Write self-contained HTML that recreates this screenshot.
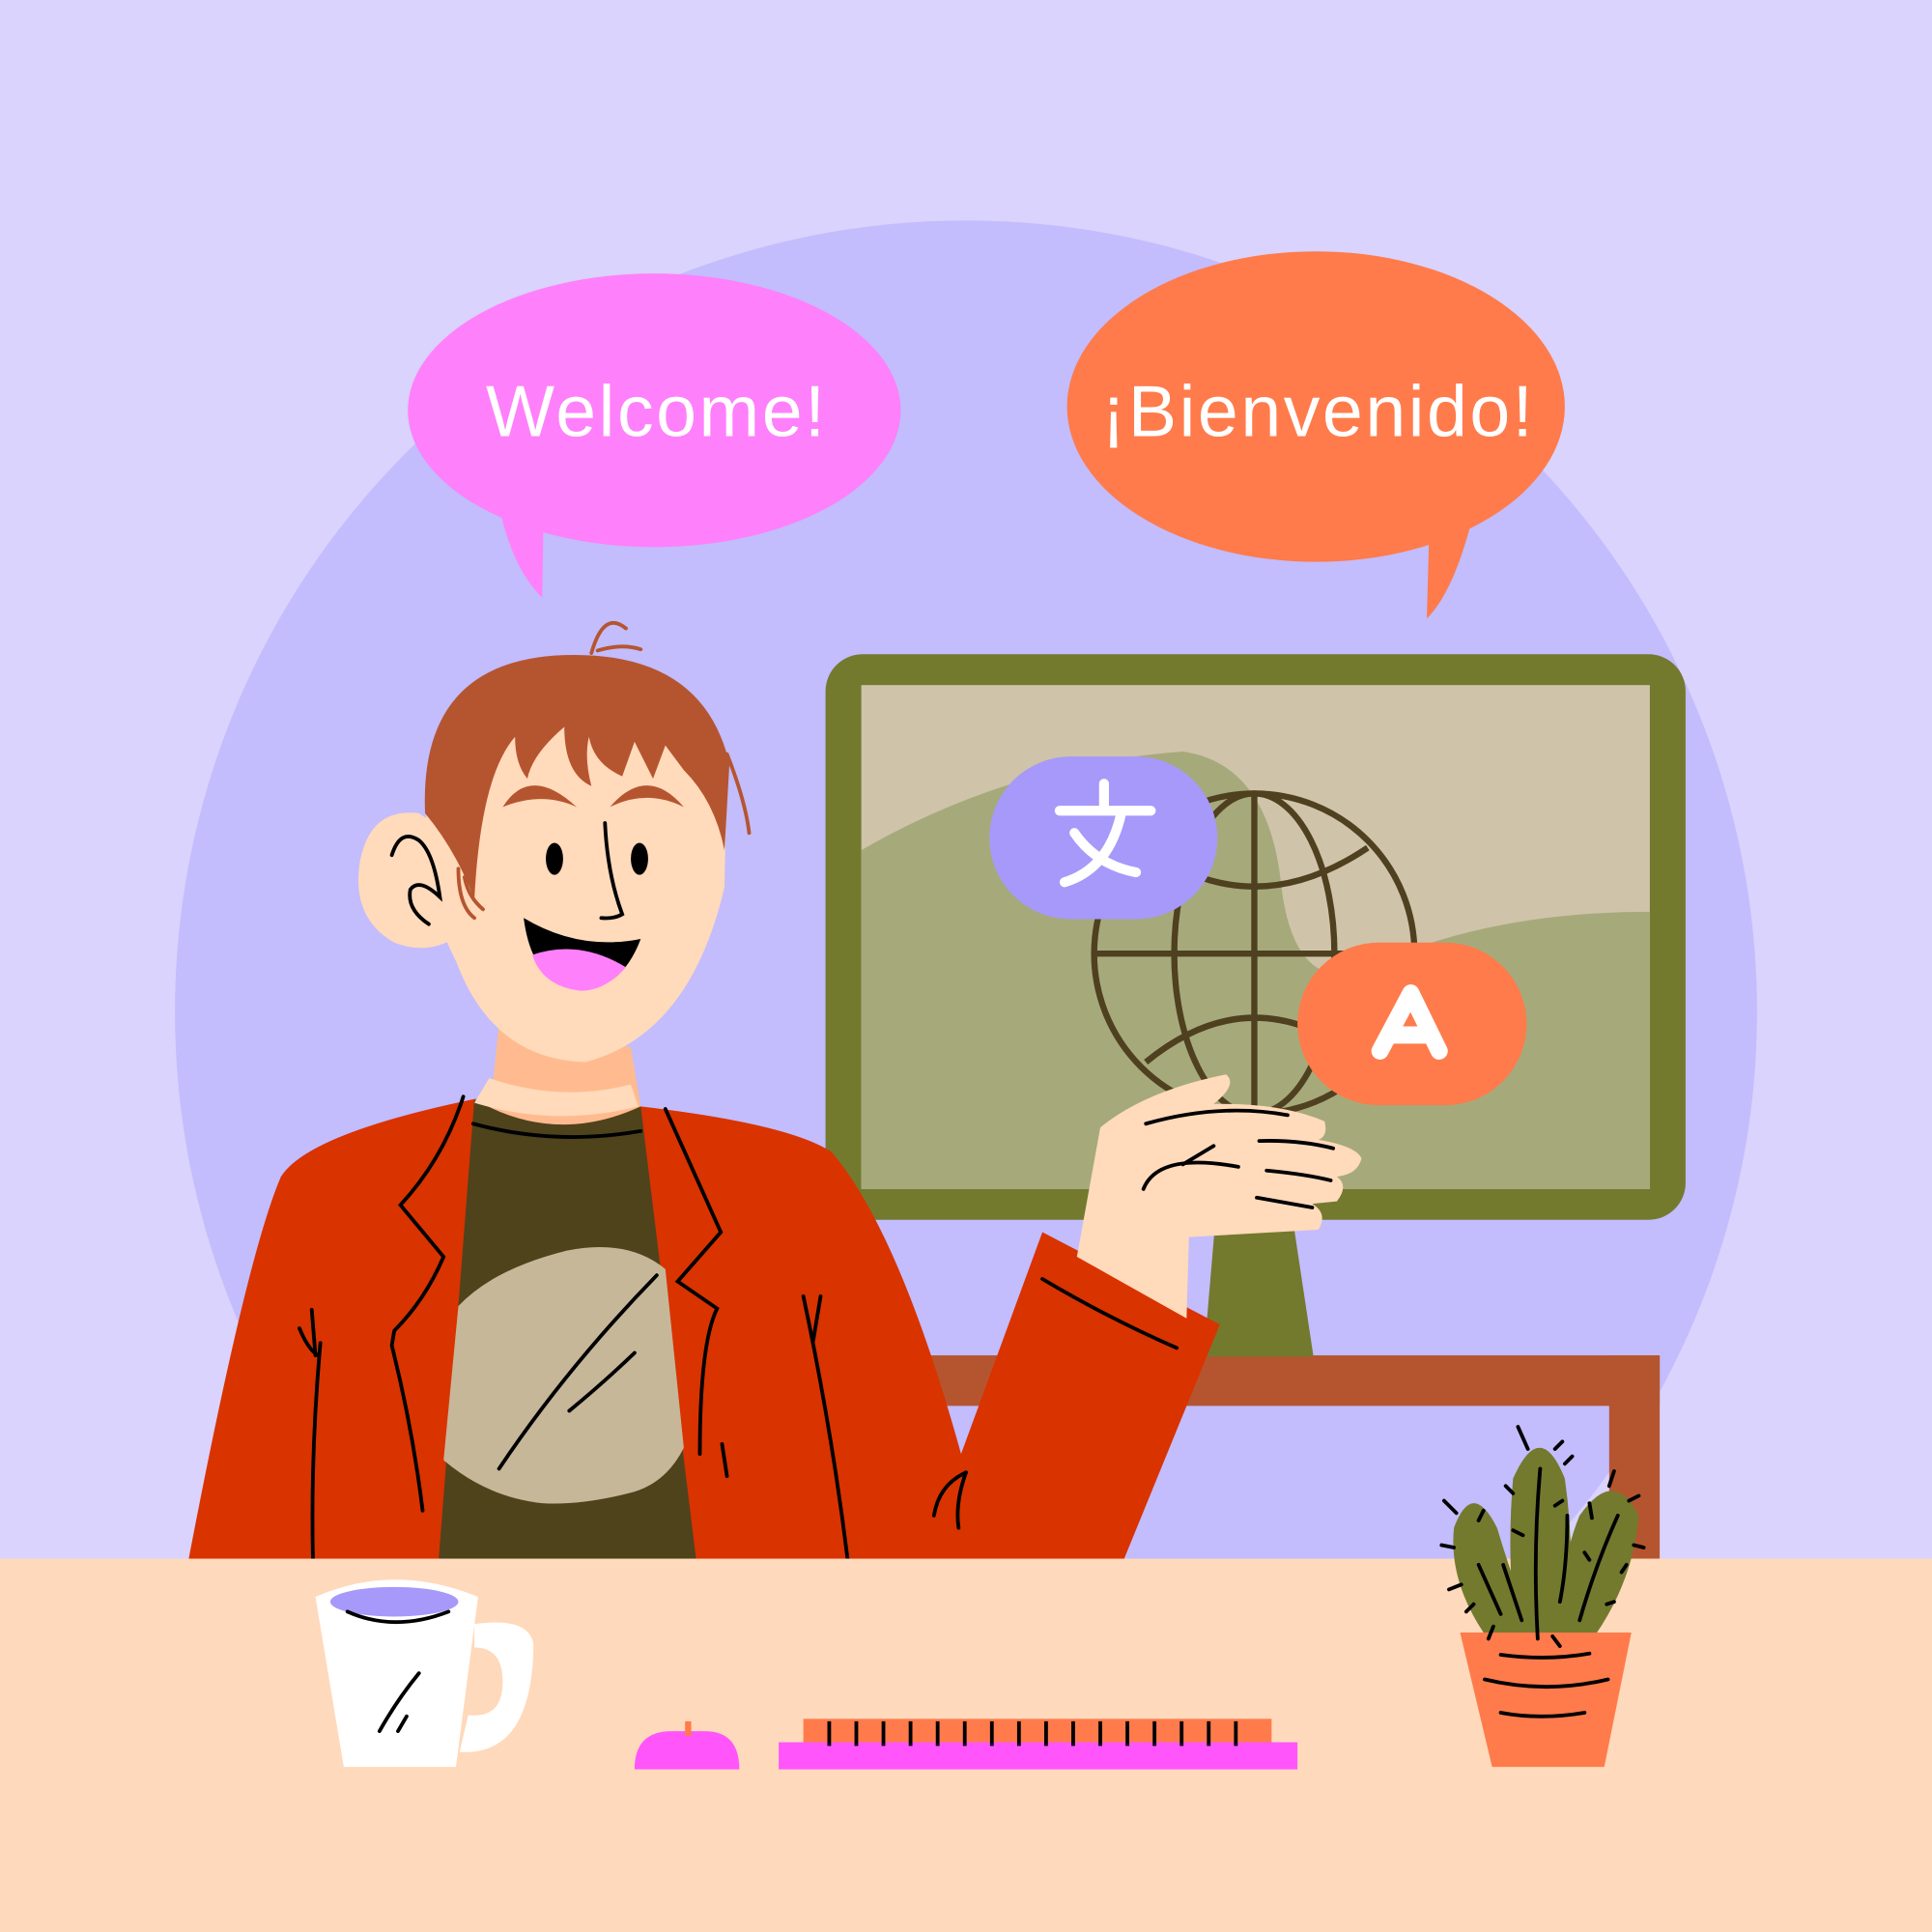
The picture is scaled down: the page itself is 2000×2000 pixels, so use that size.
<!DOCTYPE html>
<html><head><meta charset="utf-8"><style>
html,body{margin:0;padding:0;background:#d9d3fd}
svg{display:block}
</style></head><body>
<svg width="2000" height="2000" viewBox="0 0 1568 1568" xmlns="http://www.w3.org/2000/svg">
<rect width="1568" height="1568" fill="#d9d3fd"/>
<circle cx="784" cy="821" r="642" fill="#c3bcfd"/>
<!-- bubbles -->
<ellipse cx="531" cy="333" rx="200" ry="111" fill="#ff80fb"/>
<path d="M405 410 Q415 460 440 485 L441 425 Z" fill="#ff80fb"/>
<text x="533" y="354" font-family="Liberation Sans, sans-serif" font-size="59" fill="#fff" text-anchor="middle" letter-spacing="2">Welcome!</text>
<ellipse cx="1068" cy="330" rx="202" ry="126" fill="#ff7b4b"/>
<path d="M1160 430 L1158 502 Q1180 480 1195 420 Z" fill="#ff7b4b"/>
<text x="1070" y="354" font-family="Liberation Sans, sans-serif" font-size="59" fill="#fff" text-anchor="middle" letter-spacing="2">¡Bienvenido!</text>
<!-- shelf -->
<rect x="740" y="1100" width="607" height="41" fill="#b55530"/>
<rect x="1306" y="1100" width="41" height="170" fill="#b55530"/>
<!-- monitor stand -->
<polygon points="986,995 1050,995 1066,1101 977,1101" fill="#737a2e"/>
<!-- monitor -->
<rect x="670" y="531" width="698" height="459" rx="30" fill="#737a2e"/>
<rect x="699" y="556" width="640" height="409" fill="#cfc3aa"/>
<path d="M699 690 Q820 620 960 610 Q1030 620 1040 720 Q1050 800 1100 790 Q1200 740 1339 740 L1339 965 L699 965 Z" fill="#a6aa7b"/>
<!-- globe -->
<g fill="none" stroke="#4f4020" stroke-width="5">
<circle cx="1018" cy="774" r="130"/>
<ellipse cx="1018" cy="774" rx="65" ry="130"/>
<line x1="1018" y1="644" x2="1018" y2="904"/>
<line x1="888" y1="774" x2="1148" y2="774"/>
<path d="M932 690 Q1018 750 1110 688"/>
<path d="M930 862 Q1018 790 1108 862"/>
</g>
<rect x="803" y="614" width="185" height="132" rx="66" fill="#a699fa"/>
<g stroke="#fff" stroke-width="8" stroke-linecap="round" fill="none">
<line x1="896" y1="636" x2="896" y2="656"/>
<line x1="860" y1="658" x2="934" y2="658"/>
<path d="M910 660 Q900 705 864 716"/>
<path d="M872 676 Q890 702 922 708"/>
</g>
<rect x="1053" y="765" width="186" height="132" rx="66" fill="#ff7b4b"/>
<g stroke="#fff" stroke-width="14" stroke-linecap="round" stroke-linejoin="round" fill="none">
<path d="M1120 853 L1145 806 L1168 853"/>
<line x1="1128" y1="840" x2="1160" y2="840"/>
</g>
<!-- person -->
<path d="M153 1266 Q200 1020 228 955 Q250 920 385 892 L520 898 Q640 912 675 935 Q730 1000 780 1180 L846 1000 L990 1075 L912 1266 Z" fill="#d93300"/>
<polygon points="385,892 520,898 565,1266 356,1266" fill="#4f431c"/>
<path d="M372 1060 Q400 1030 460 1015 Q510 1005 540 1030 L555 1175 Q540 1205 510 1212 Q470 1222 440 1220 Q395 1215 360 1185 Z" fill="#c6b799"/>
<path d="M405 830 L400 880 Q390 900 385 892 Q450 930 520 898 L512 850 Z" fill="#ffbb8f"/>
<path d="M397 875 Q455 895 512 880 L518 898 Q450 915 385 895 Z" fill="#ffdabb"/>
<path d="M352 640 Q330 700 370 780 Q400 860 475 862 Q560 840 588 720 L590 620 L420 570 Z" fill="#ffdabb"/>
<path d="M340 660 Q300 655 292 700 Q285 745 320 765 Q345 775 368 762 L370 680 Z" fill="#ffdabb"/>
<path d="M345 660 Q340 540 450 532 Q570 525 592 620 L588 690 Q580 650 555 625 L540 605 L530 632 L515 602 L505 630 Q482 620 478 598 Q474 615 480 638 Q458 628 458 590 Q432 612 428 632 Q418 620 418 598 Q390 630 385 730 Q370 690 345 660 Z" fill="#b55530"/>
<path d="M408 655 Q430 620 468 655 Q440 642 408 655 Z" fill="#b55530"/>
<path d="M495 655 Q525 620 555 655 Q525 640 495 655 Z" fill="#b55530"/>
<ellipse cx="450" cy="697" rx="7" ry="13" fill="#000"/>
<ellipse cx="519" cy="697" rx="7" ry="13" fill="#000"/>
<path d="M425 745 Q470 772 520 762 Q505 802 472 803 Q432 800 425 745 Z" fill="#000"/>
<path d="M432 775 Q470 762 508 785 Q490 805 470 804 Q440 800 432 775 Z" fill="#ff80fb"/>
<g fill="none" stroke="#000" stroke-width="3" stroke-linecap="round">
<path d="M491 668 Q493 710 505 742 Q498 746 488 745"/>
<path d="M318 694 Q325 672 340 682 Q352 692 357 728 Q340 712 333 722 Q330 738 348 750"/>
<path d="M384 912 Q450 930 520 918"/>
<path d="M376 890 Q360 940 325 978 L360 1020 Q345 1055 320 1080 L318 1092 Q335 1160 343 1226"/>
<path d="M540 900 L585 1000 L550 1040 L582 1062 Q568 1090 568 1180"/>
<path d="M533 1035 Q460 1110 405 1192"/>
<path d="M515 1098 Q490 1122 462 1145"/>
<path d="M260 1090 Q252 1180 254 1266"/>
<path d="M243 1078 Q250 1095 258 1100"/><path d="M253 1063 L256 1100"/>
<path d="M652 1052 Q675 1160 688 1266"/>
<path d="M660 1088 L666 1052"/>
<path d="M586 1172 L590 1198"/>
<path d="M846 1038 Q900 1070 955 1094"/>
<path d="M784 1195 Q762 1205 758 1230"/><path d="M784 1195 Q775 1220 778 1240"/>
</g>
<!-- hand -->
<path d="M893 915 Q930 885 995 872 Q1005 880 985 896 Q1040 895 1075 910 Q1078 922 1070 925 Q1100 930 1105 940 Q1102 953 1085 955 Q1095 962 1085 975 L1065 977 Q1078 985 1070 998 L965 1004 L963 1070 L874 1020 Z" fill="#ffdabb"/>
<g fill="none" stroke="#000" stroke-width="3" stroke-linecap="round">
<path d="M930 912 Q990 895 1045 905"/><path d="M1022 926 Q1055 925 1082 932"/>
<path d="M928 965 Q940 935 1005 947"/><path d="M960 945 L985 930"/>
<path d="M1028 950 Q1060 953 1080 958"/><path d="M1020 972 L1065 980"/>
</g>
<g fill="none" stroke="#b55530" stroke-width="3" stroke-linecap="round">
<path d="M480 530 Q490 495 508 510"/><path d="M485 528 Q505 522 520 527"/>
<path d="M590 612 Q605 650 608 676"/>
<path d="M372 705 Q372 735 385 745"/><path d="M377 712 Q380 728 392 738"/>
</g>
<!-- floor -->
<rect x="0" y="1265" width="1568" height="303" fill="#ffd9bb"/>
<!-- mug -->
<path d="M385 1318 Q430 1312 433 1335 Q432 1420 380 1422 L373 1422 L380 1392 Q408 1395 408 1365 Q408 1337 385 1337 Z" fill="#fff"/>
<path d="M256 1296 Q320 1268 388 1296 L370 1434 L279 1434 Z" fill="#fff"/>
<ellipse cx="320" cy="1300" rx="52" ry="12" fill="#a699fa"/>
<g fill="none" stroke="#000" stroke-width="3" stroke-linecap="round">
<path d="M282 1308 Q320 1325 364 1308"/>
<path d="M340 1358 Q322 1380 308 1405"/><path d="M330 1393 L323 1405"/>
</g>
<!-- mouse -->
<path d="M515 1436 Q515 1405 545 1405 L572 1405 Q600 1405 600 1436 Z" fill="#ff55fb"/>
<rect x="556" y="1397" width="5" height="12" fill="#ff7b4b"/>
<!-- keyboard -->
<rect x="652" y="1395" width="380" height="22" fill="#ff7b4b"/>
<rect x="632" y="1414" width="421" height="22" fill="#ff55fb"/>
<g stroke="#000" stroke-width="3">
<path d="M673 1397v20M695 1397v20M717 1397v20M739 1397v20M761 1397v20M783 1397v20M805 1397v20M827 1397v20M849 1397v20M871 1397v20M893 1397v20M915 1397v20M937 1397v20M959 1397v20M981 1397v20M1003 1397v20"/>
</g>
<!-- cactus -->
<path d="M1180 1240 Q1195 1200 1215 1240 Q1230 1290 1250 1340 L1215 1340 Q1175 1290 1180 1240 Z" fill="#737a2e"/>
<path d="M1228 1200 Q1250 1150 1270 1200 Q1280 1270 1270 1340 L1232 1340 Q1222 1270 1228 1200 Z" fill="#737a2e"/>
<path d="M1282 1230 Q1310 1190 1330 1230 Q1325 1290 1285 1340 L1265 1340 Q1265 1270 1282 1230 Z" fill="#737a2e"/>
<polygon points="1185,1325 1324,1325 1302,1434 1211,1434" fill="#ff7b4b"/>
<g fill="none" stroke="#000" stroke-width="3" stroke-linecap="round">
<path d="M1250 1192 Q1244 1260 1248 1330"/><path d="M1272 1230 Q1272 1270 1266 1300"/>
<path d="M1313 1230 Q1295 1270 1282 1315"/><path d="M1200 1270 L1218 1310"/>
<path d="M1220 1270 L1235 1315"/>
<path d="M1232 1158 L1240 1176M1262 1176 L1268 1170M1270 1188 L1276 1182M1172 1218 L1182 1228M1204 1226 L1200 1234M1170 1254 L1180 1256M1176 1290 L1186 1286M1190 1308 L1196 1302M1208 1330 L1212 1320M1260 1328 L1266 1336M1290 1220 L1292 1232M1310 1194 L1306 1206M1322 1218 L1330 1214M1326 1254 L1334 1256M1316 1276 L1320 1270M1304 1302 L1310 1300M1286 1260 L1290 1266M1228 1242 L1236 1246M1222 1206 L1228 1212M1262 1222 L1268 1218"/>
<path d="M1218 1343 Q1255 1348 1290 1342"/><path d="M1205 1363 Q1255 1375 1305 1363"/><path d="M1218 1390 Q1250 1396 1286 1390"/>
</g>
</svg>
</body></html>
